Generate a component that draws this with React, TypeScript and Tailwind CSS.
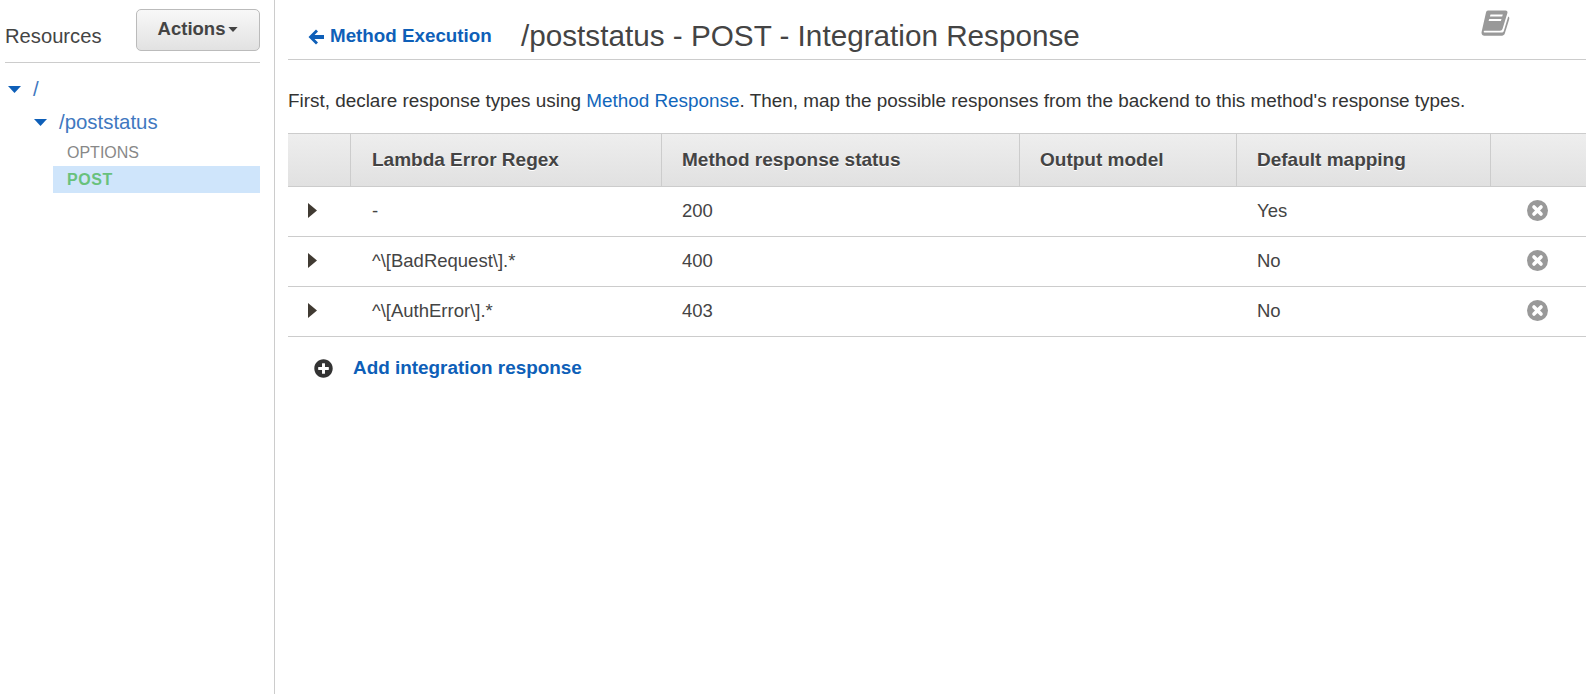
import React from 'react';
import { FaPlusCircle } from 'react-icons/fa';

const columns = ['Lambda Error Regex', 'Method response status', 'Output model', 'Default mapping'];

const rows = [
  { regex: '-', status: '200', mapping: 'Yes' },
  { regex: '^\\[BadRequest\\].*', status: '400', mapping: 'No' },
  { regex: '^\\[AuthError\\].*', status: '403', mapping: 'No' },
];

const gridCols = 'grid grid-cols-[63px_311px_358px_217px_254px_95px]';

const Caret = ({ className }: { className: string }) => (
  <svg viewBox="0 0 13 7" className={className}>
    <path d="M0 0H13L6.5 7Z" fill="currentColor" />
  </svg>
);

const Sidebar = () => (
  <aside className="w-[275px] shrink-0 border-r border-[#ccc] pl-[5px] pr-[14px] pt-[9px]">
    <div className="flex justify-between items-start border-b border-[#ccc] h-[54px]">
      <span className="text-[20.2px] text-[#444] mt-[17px] leading-[20px]">Resources</span>
      <button
        type="button"
        className="w-[124px] h-[42px] rounded-[5px] border border-[#bbb] bg-gradient-to-b from-[#f8f8f8] to-[#e2e2e2] flex items-center justify-center pb-[2px] font-bold text-[18.5px] text-[#444]"
      >
        Actions
        <Caret className="w-[10px] h-[5px] ml-[3px] mt-[1px] text-[#444]" />
      </button>
    </div>
    <div className="mt-[10px]">
      <div className="flex items-center h-[33px] pl-[3px] text-[#4078c0]">
        <Caret className="w-[13px] h-[7px] text-[#0e5fb8]" />
        <span className="ml-[12px] text-[20.4px]">/</span>
      </div>
      <div className="flex items-center h-[33px] pl-[29px] text-[#4078c0]">
        <Caret className="w-[13px] h-[7px] text-[#0e5fb8]" />
        <span className="ml-[12px] text-[20.4px]">/poststatus</span>
      </div>
      <div className="ml-[48px] pl-[14px] h-[27px] flex items-center text-[16px] text-[#888]">OPTIONS</div>
      <div className="ml-[48px] pl-[14px] h-[27px] flex items-center text-[16px] font-bold tracking-[0.6px] text-[#69c17c] bg-[#cfe5fb]">POST</div>
    </div>
  </aside>
);

const BookIcon = () => (
  <svg viewBox="0 0 30 28" className="w-[30px] h-[28px] text-[#999]">
    <path
      fill="currentColor"
      d="M8 1.5H25.5C27 1.5 27.8 2.6 27.4 4L22.6 19.8C22.2 21 21.2 21.8 20 21.8H4.5C3.6 21.8 3.3 23.6 4.5 23.6H21.5C22.6 23.6 23.4 23 23.8 22L28.2 7.5C29.2 8 29.6 9 29.2 10.2L24.8 24.6C24.3 26 23.2 26.7 22 26.7H5C2.6 26.7 1 25 1.7 22.4L6 3.6C6.3 2.3 7 1.5 8 1.5Z"
    />
    <path fill="#fff" d="M10.5 5.6H22.8L22.2 7.6H9.9ZM9.2 10H21.5L20.9 12H8.6Z" />
  </svg>
);

const ArrowLeft = () => (
  <svg viewBox="0 0 16 16" className="w-[16px] h-[16px] mr-[6px] mt-[1px] text-[#0e5fb8]">
    <path fill="currentColor" d="M8 0.5L10 2.5L6.5 6H16V10H6.5L10 13.5L8 15.5L0.5 8Z" />
  </svg>
);

const RemoveIcon = () => (
  <svg viewBox="0 0 21 21" className="w-[21px] h-[21px]">
    <circle cx="10.5" cy="10.5" r="10.5" fill="#999" />
    <path d="M7 7L14 14M14 7L7 14" stroke="#fff" strokeWidth="3.6" strokeLinecap="round" />
  </svg>
);

export default function App() {
  return (
    <div className="flex h-[694px] bg-white pr-[4px] text-[#444] font-['Liberation_Sans',Arial,sans-serif] overflow-hidden">
      <Sidebar />
      <main className="flex-1 ml-[13px]">
        <div className="relative flex items-center h-[60px] border-b border-[#ccc] pl-[20px] pt-[13px]">
          <a className="flex items-center font-bold text-[18.8px] text-[#0e5fb8] w-[213px]">
            <ArrowLeft />
            Method Execution
          </a>
          <h1 className="text-[29.7px] text-[#444]">/poststatus - POST - Integration Response</h1>
          <div className="absolute left-[1192px] top-[9px]">
            <BookIcon />
          </div>
        </div>
        <p className="mt-[30px] h-[43px] text-[18.9px] leading-[22px] text-[#333] whitespace-nowrap">
          First, declare response types using <a className="text-[#1166bb]">Method Response</a>. Then, map the possible responses from the backend to this method's response types.
        </p>
        <div className={`${gridCols} h-[54px] border-y border-[#ccc] bg-gradient-to-b from-[#eee] to-[#e1e1e1]`}>
          <div className="border-r border-[#ccc]" />
          {columns.map((col, idx) => (
            <div key={col} className={`border-r border-[#ccc] flex items-center font-bold text-[19px] text-[#444] [text-shadow:0_1px_0_#fff] ${idx === 0 ? 'pl-[21px]' : 'pl-[20px]'}`}>
              {col}
            </div>
          ))}
          <div />
        </div>
        {rows.map((row) => (
          <div key={row.status} className={`${gridCols} h-[50px] border-b border-[#ccc] text-[18.5px] items-center`}>
            <div className="pl-[20px] pb-[2px]">
              <svg viewBox="0 0 9 15" className="w-[9px] h-[15px] text-[#403a32]">
                <path d="M0 0L9 7.5L0 15Z" fill="currentColor" />
              </svg>
            </div>
            <div className="pl-[21px] pb-[2px]">{row.regex}</div>
            <div className="pl-[20px] pb-[2px]">{row.status}</div>
            <div />
            <div className="pl-[20px] pb-[2px]">{row.mapping}</div>
            <div className="pl-[36px] pb-[2px]">
              <RemoveIcon />
            </div>
          </div>
        ))}
        <div className="flex items-center mt-[17px] pl-[26px] font-bold text-[18.9px] text-[#0e5fb8]">
          <FaPlusCircle className="text-[19px] text-[#333] mr-[20px]" />
          Add integration response
        </div>
      </main>
    </div>
  );
}
